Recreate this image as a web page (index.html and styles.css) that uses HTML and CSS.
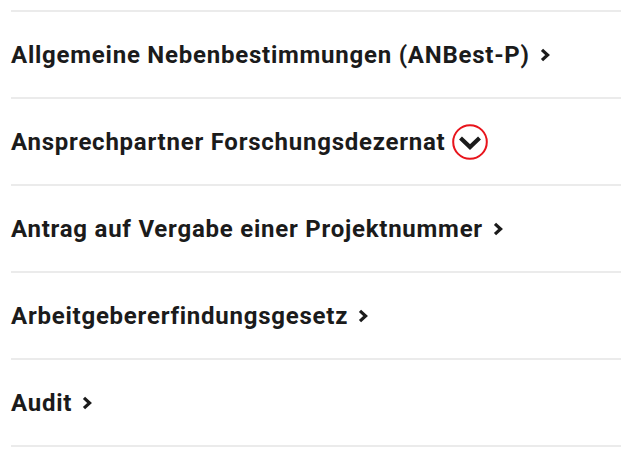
FILE: index.html
```html
<!DOCTYPE html>
<html lang="de">
<head>
    <meta charset="UTF-8">
    <meta name="viewport" content="width=device-width, initial-scale=1.0">
    <title>Forschung A-Z</title>
    <link rel="stylesheet" href="styles.css">
</head>
<body>
    <ul class="topics">
        <li class="topic">
            <a href="#">Allgemeine Nebenbestimmungen (ANBest-P)
                <svg class="chev" viewBox="0 0 10 14"><path d="M2 1.8 L7.6 7 L2 12.2"/></svg>
            </a>
        </li>
        <li class="topic open">
            <a href="#">Ansprechpartner Forschungsdezernat
                <svg class="toggle" viewBox="0 0 36 36"><circle cx="18" cy="18" r="16.8"/><path d="M8.5 14 L18 23 L27.5 14"/></svg>
            </a>
        </li>
        <li class="topic">
            <a href="#">Antrag auf Vergabe einer Projektnummer
                <svg class="chev" viewBox="0 0 10 14"><path d="M2 1.8 L7.6 7 L2 12.2"/></svg>
            </a>
        </li>
        <li class="topic">
            <a href="#">Arbeitgebererfindungsgesetz
                <svg class="chev" viewBox="0 0 10 14"><path d="M2 1.8 L7.6 7 L2 12.2"/></svg>
            </a>
        </li>
        <li class="topic">
            <a href="#">Audit
                <svg class="chev" viewBox="0 0 10 14"><path d="M2 1.8 L7.6 7 L2 12.2"/></svg>
            </a>
        </li>
    </ul>
</body>
</html>
```

FILE: styles.css
```css
html, body {
    margin: 0;
    background: #fff;
    font-family: Roboto, "Liberation Sans", sans-serif;
}

.topics {
    list-style: none;
    margin: 10px 0 0 11px;
    padding: 0;
    border-top: 2px solid #ebebeb;
}

.topic {
    border-bottom: 2px solid #ebebeb;
}

.topic a {
    height: 85px;
    display: flex;
    align-items: center;
    gap: 10px;
    color: #1b1b1b;
    font-size: 24px;
    font-weight: 700;
    letter-spacing: 0.76px;
    text-decoration: none;
}

.chev {
    width: 10px;
    height: 14px;
    fill: none;
    stroke: #1b1b1b;
    stroke-width: 3.2;
}

.toggle {
    width: 36px;
    height: 36px;
    margin-left: -3px;
    fill: none;
}

.toggle circle {
    stroke: #e8141c;
    stroke-width: 2;
}

.toggle path {
    stroke: #1b1b1b;
    stroke-width: 4.2;
}
```
